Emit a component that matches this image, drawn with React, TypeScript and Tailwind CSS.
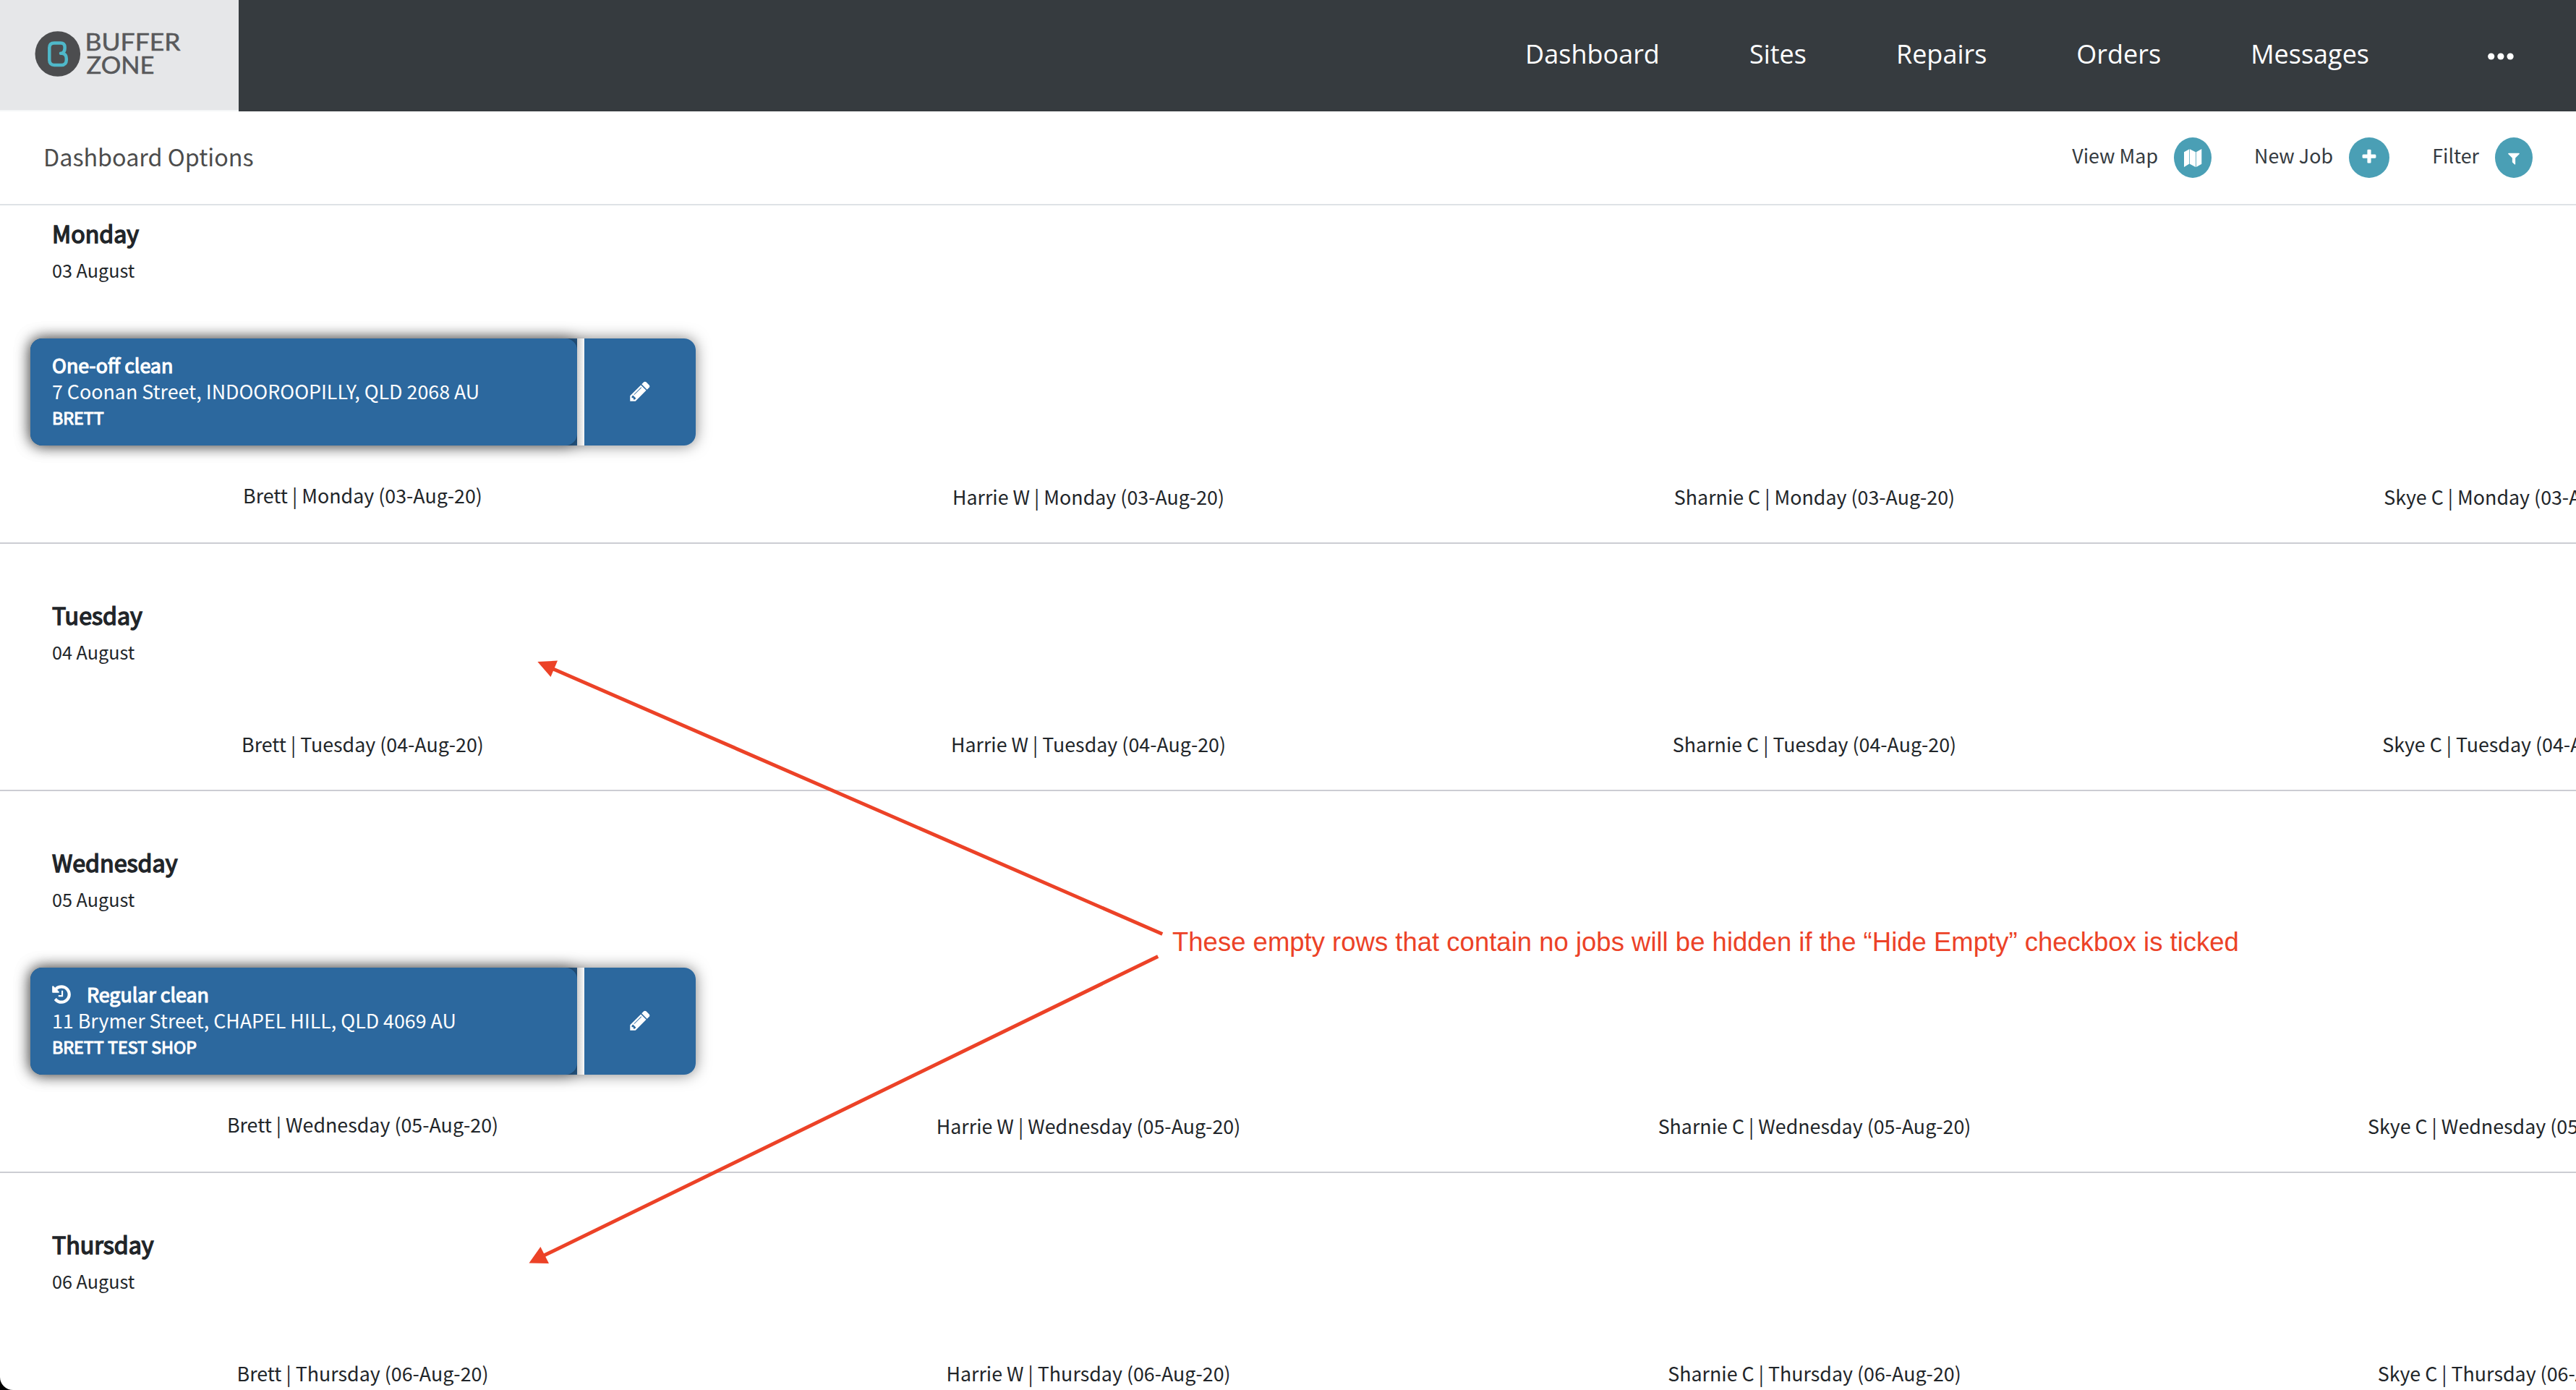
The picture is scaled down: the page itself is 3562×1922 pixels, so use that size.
import React from "react";

const PENCIL = "M491 1536l91-91-235-235-91 91v107h128v128h107zm523-928q0-22-22-22-10 0-17 7l-542 542q-7 7-7 17 0 22 22 22 10 0 17-7l542-542q7-7 7-17zm-54-192l416 416-832 832h-416v-416zm683 96q0 53-37 90l-166 166-416-416 166-165q36-38 90-38 53 0 91 38l235 234q37 39 37 91z";
const PLUS = "M1600 736v192q0 40-28 68t-68 28h-416v416q0 40-28 68t-68 28h-192q-40 0-68-28t-28-68v-416h-416q-40 0-68-28t-28-68v-192q0-40 28-68t68-28h416v-416q0-40 28-68t68-28h192q40 0 68 28t28 68v416h416q40 0 68 28t28 68z";
const FILTER = "M1595 295q17 41-14 70l-493 493v742q0 42-39 59-13 5-25 5-27 0-45-19l-256-256q-19-19-19-45v-486l-493-493q-31-29-14-70 17-39 59-39h1280q42 0 59 39z";
const HISTORY = "M1664 896q0 156-61 298t-164 245-245 164-298 61q-172 0-327-72.5t-264-204.5q-7-10-6.5-22.5t8.5-20.5l137-138q10-9 25-9 16 2 23 12 73 95 179 147t225 52q104 0 198.5-40.5t163.5-109.5 109.5-163.5 40.5-198.5-40.5-198.5-109.5-163.5-163.5-109.5-198.5-40.5q-98 0-188 35.5t-160 101.5l137 138q31 30 14 69-17 40-59 40h-448q-26 0-45-19t-19-45v-448q0-42 40-59 39-17 69 14l130 129q107-101 244.5-156.5t284.5-55.5q156 0 298 61t245 164 164 245 61 298zm-640-288v448q0 14-9 23t-23 9h-320q-14 0-23-9t-9-23v-64q0-14 9-23t23-9h224v-352q0-14 9-23t23-9h64q14 0 23 9t9 23z";

function Glyph({ d, className }: { d: string; className: string }) {
  return (
    <svg viewBox="0 0 1792 1792" className={className} fill="currentColor">
      <path d={d} />
    </svg>
  );
}

function MapGlyph() {
  return (
    <svg viewBox="0 0 25 25" className="h-[25px] w-[25px]" fill="currentColor">
      <path d="M0 4.300L7.300 0.200V20.500L0 25ZM8 0.200L16 4.300V25L8 20.700ZM16.800 4.300L24.300 0V20.800L16.800 25Z" />
    </svg>
  );
}

function Logo() {
  return (
    <svg viewBox="0 0 220 76" className="h-[76px] w-[220px]" fill="none" strokeLinecap="round" strokeLinejoin="round">
      <circle cx="35.800" cy="38.500" r="31.300" fill="#4c4d4f" />
      <path
        d="M40 37.700H42C44.500 36 45.600 34 45.600 31V29C45.600 25.500 43.500 23.400 40 23.400H31C26.500 23.400 24.300 26 24.300 30V47C24.300 51.500 27 54 31 54H41C45.500 54 47.800 51 47.800 47V45C47.800 41 45.500 38.300 42 37.700"
        stroke="#4fb8c9"
        strokeWidth="4.500"
      />
      <g fill="#58595b" stroke="#58595b" strokeWidth="0.500" className="font-['Lato',sans-serif] text-[32px]">
        <text x="73.500" y="33.700" textLength="132" lengthAdjust="spacingAndGlyphs">BUFFER</text>
        <text x="75.500" y="65.800" textLength="94" lengthAdjust="spacingAndGlyphs">ZONE</text>
      </g>
    </svg>
  );
}

function Action({ label, width, circle, children }: { label: string; width: string; circle: string; children: React.ReactNode }) {
  return (
    <div className={`${width} flex items-center justify-end`}>
      <span className="-mt-[5px]">{label}</span>
      <span className={`${circle} ml-[22px] flex h-14 items-center justify-center rounded-[50%] bg-[#4a9fb5] text-white`}>{children}</span>
    </div>
  );
}

type Job = { title: string; address: string; client: string; repeat: boolean };

function JobCard({ job }: { job: Job }) {
  return (
    <div className="mt-[70px] ml-[42px] flex h-[148px] w-[920px] rounded-[16px] text-white shadow-[0_0_20px_rgba(0,0,0,0.5)]">
      <div className="w-[756px] rounded-l-[16px] bg-[#265a89]">
        <div className="h-full rounded-[16px] bg-[#2c689e] pt-[19px] pl-[30px] text-[26.800px] shadow-[0_0_20px_rgba(0,0,0,0.5)]">
          <div className="flex items-center leading-[35px] [-webkit-text-stroke:1.200px_white]">
            {job.repeat && <Glyph d={HISTORY} className="mr-[20px] -ml-[2px] h-[30px] w-[30px] stroke-none" />}
            {job.title}
          </div>
          <div className="leading-[37px]">{job.address}</div>
          <div className="text-[23.300px] leading-[36px] [-webkit-text-stroke:1.100px_white]">{job.client}</div>
        </div>
      </div>
      <div className="relative w-[10px] bg-linear-to-r from-[#cccccc] to-[#fafafa]" />
      <div className="relative flex flex-1 items-center justify-center rounded-r-[16px] bg-[#2c689e] pb-[2px]">
        <Glyph d={PENCIL} className="h-8 w-8" />
      </div>
    </div>
  );
}

const days: { day: string; date: string; code: string; box: string; job?: Job }[] = [
  { day: "Monday", date: "03 August", code: "03-Aug-20", box: "h-[468px] pt-[14px]", job: { title: "One-off clean", address: "7 Coonan Street, INDOOROOPILLY, QLD 2068 AU", client: "BRETT", repeat: false } },
  { day: "Tuesday", date: "04 August", code: "04-Aug-20", box: "h-[342px] pt-[74px]" },
  { day: "Wednesday", date: "05 August", code: "05-Aug-20", box: "h-[528px] pt-[74px]", job: { title: "Regular clean", address: "11 Brymer Street, CHAPEL HILL, QLD 4069 AU", client: "BRETT TEST SHOP", repeat: true } },
  { day: "Thursday", date: "06 August", code: "06-Aug-20", box: "h-[342px] pt-[74px]" },
];

const columns = [
  { name: "Brett", width: "w-[1003px]" },
  { name: "Harrie W", width: "w-[1004px]" },
  { name: "Sharnie C", width: "w-[1004px]" },
  { name: "Skye C", width: "w-[922px]" },
];

function Annotation() {
  return (
    <>
      <svg viewBox="0 0 900 850" className="absolute top-[900px] left-[720px] h-[850px] w-[900px]" stroke="#ec4227" fill="#ec4227">
        <path d="M887.300 391.500L45 25M881.200 422.500L30 837" strokeWidth="5" fill="none" />
        <path d="M23.300 15L51 13.500L41.500 36ZM11.500 846.500L27.400 824L39 847Z" stroke="none" />
      </svg>
      <div className="absolute top-[1278px] left-[1621px] font-['Liberation_Sans',sans-serif] text-[36.500px] leading-[50px] whitespace-nowrap text-[#ec4227]">
        These empty rows that contain no jobs will be hidden if the “Hide Empty” checkbox is ticked
      </div>
    </>
  );
}

export default function App() {
  return (
    <div className="bg-black">
      <div className="relative h-[1922px] w-[3562px] overflow-hidden rounded-bl-[18px] bg-white font-['Noto_Sans_CJK_SC',sans-serif] text-[#212529]">
        <header className="flex h-[154px] bg-[#363b3f]">
          <div className="h-full w-[330px] border-b-2 border-[#f5f6f7] bg-[#e6e7e9] pt-[36px] pl-[44px]">
            <Logo />
          </div>
          <nav className="ml-auto flex items-start gap-[124px] pt-[50px] font-['Open_Sans',sans-serif] text-[36px] leading-[50px] text-white">
            <span>Dashboard</span>
            <span>Sites</span>
            <span>Repairs</span>
            <span>Orders</span>
            <span>Messages</span>
            <svg viewBox="0 0 36 10" className="mt-[23px] mr-[86px] ml-[40px] h-[10px] w-[36px]" fill="currentColor">
              <circle cx="4.700" cy="5" r="4.600" />
              <circle cx="17.900" cy="5" r="4.600" />
              <circle cx="31.100" cy="5" r="4.600" />
            </svg>
          </nav>
        </header>
        <section className="flex h-[130px] items-center border-b-2 border-[#dee2e6] pr-[60px] pl-[60px]">
          <h1 className="-mt-1 text-[32.300px] text-[#4c4c4c]">Dashboard Options</h1>
          <div className="ml-auto flex items-center text-[26.800px] text-[#343a40]">
            <Action label="View Map" width="w-[246px]" circle="w-[52px]"><MapGlyph /></Action>
            <Action label="New Job" width="w-[246px]" circle="w-14"><Glyph d={PLUS} className="-mt-[2px] h-6 w-6" /></Action>
            <Action label="Filter" width="w-[198px]" circle="w-[52px]"><Glyph d={FILTER} className="mt-[2px] h-5 w-5" /></Action>
          </div>
        </section>
        {days.map((d) => (
          <section key={d.day} className={`${d.box} flex flex-col border-b-2 border-[#cccdd3]`}>
            <h2 className="-mt-[1px] mb-[1px] ml-[72px] text-[32.200px] leading-[50px] font-normal [-webkit-text-stroke:1.500px_#212529]">{d.day}</h2>
            <p className="ml-[72px] text-[25.200px] leading-[50px]">{d.date}</p>
            {d.job && <JobCard job={d.job} />}
            <div className="mt-auto mb-[38px] flex text-[26.800px] leading-[50px]">
              {columns.map((c, i) => (
                <span key={c.name} className={`${c.width} ${d.job && i === 0 ? "-mt-[2px] mb-[2px]" : ""} shrink-0 text-center`}>
                  {c.name} | {d.day} ({d.code})
                </span>
              ))}
            </div>
          </section>
        ))}
        <Annotation />
      </div>
    </div>
  );
}
